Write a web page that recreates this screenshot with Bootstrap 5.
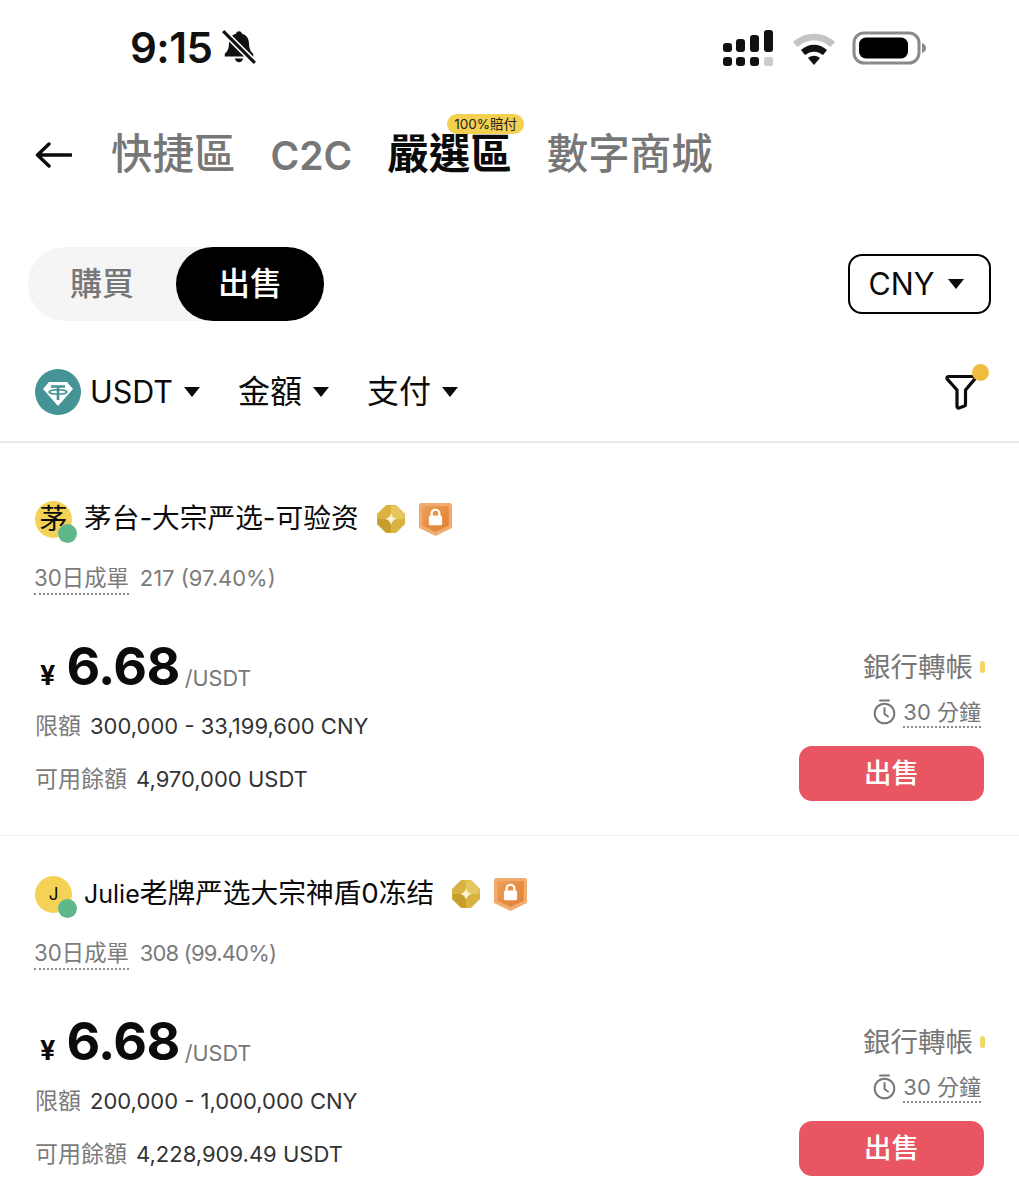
<!DOCTYPE html>
<html lang="zh-Hant">
<head>
<meta charset="utf-8">
<title>嚴選區</title>
<link href="https://cdn.jsdelivr.net/npm/bootstrap@5.3.0/dist/css/bootstrap.min.css" rel="stylesheet">
<style>
html,body{height:1200px;overflow:hidden;background:#fff}
body{font-family:Inter,"Noto Sans CJK TC","Noto Sans CJK SC",sans-serif;color:#0b0b0b;width:1019px}
.status-bar{height:95px;padding:0 93px 0 130px}
.clock{font-size:42px;font-weight:600;letter-spacing:-.5px;line-height:1;color:#111}
.bell{margin-left:-1px;margin-top:-1px}
.wifi-ico{margin-right:-2px}
.tab-row{height:118px;padding-left:35px;padding-top:2px}
.back-arrow{margin-right:39px;margin-top:-1px}
.tab-item{font-size:41.5px;font-weight:500;color:#777;line-height:1;margin-right:35px;white-space:nowrap}
.tab-item.latin{font-weight:600;font-size:39px}
.tab-item.active{color:#0a0a0a;font-weight:700}
.pay-tag{top:-20px;left:60px;background:#f4d050;border-radius:10px;font-size:13.5px;font-weight:400;line-height:20px;padding:0 7px;color:#222;white-space:nowrap}
.side-row{height:74px;margin-top:34px;padding:0 28px 0 28px}
.side-switch{width:296px;height:74px;background:#f5f5f5;border-radius:37px}
.side-opt{width:148px;height:74px;border-radius:37px;font-size:32px;font-weight:500;color:#777}
.side-opt.on{background:#000;color:#fff}
.cny-btn{width:143px;height:60px;border:2px solid #000;border-radius:14px;font-size:30.5px;font-weight:400;gap:14px;padding-right:6px}
.caret{width:0;height:0;border-left:8.5px solid transparent;border-right:8.5px solid transparent;border-top:10px solid #0b0b0b;display:inline-block}
.filter-row{margin-top:35px;padding:0 28px 13px 35px;border-bottom:2px solid #e8e8e8;box-sizing:content-box;height:72px}
.filter-item{font-size:32px;line-height:1;gap:11px;margin-right:38px}
.filter-item .latin-txt{font-size:30.5px}
.coin{width:46px;height:46px;margin-right:-2px}
.filter-wrap{margin-right:14px}
.dot{top:-10px;right:-12px;width:17px;height:17px;background:#eebd3f;border-radius:50%}
.offer{height:375px;border-bottom:1px solid #efefef;padding:0 35px;position:relative}
.offer-first{height:393px;padding-top:56px}
.offer-next{padding-top:38px;border-bottom:0}
.name-line{height:40px;font-size:27.7px;line-height:1;gap:14px;white-space:nowrap}
.avatar{width:37px;height:37px;background:#f4d255;border-radius:50%;font-size:28px;line-height:37px;text-align:center;margin-right:-2px}
.avatar.small-letter{font-size:17px}
.online{right:-5px;bottom:-5px;width:19px;height:19px;background:#5fb88b;border-radius:50%}
.latin-name{font-size:25px}
.medal-gold{width:28px;height:28px;flex:none;margin-left:4px}
.medal-lock{width:33px;height:33px;flex:none}
.stats-line{margin-top:23px;height:36px;font-size:22px;color:#7b7b7b;line-height:32px;gap:11px;white-space:nowrap}
.stat-tight{letter-spacing:-.8px}
.dotted{border-bottom:2px dotted #8b8b8b;display:inline-block;height:33px;font-size:22.3px;margin-left:-1px}
.price-side{margin-top:37px;height:210px}
.price-line{height:64px;gap:0;white-space:nowrap}
.yen{font-size:27px;font-weight:700;margin-right:11px;margin-left:5px;margin-top:17px;line-height:1}
.amount{font-size:52px;font-weight:700;line-height:1;letter-spacing:-.6px;font-family:Inter,sans-serif}
.per{font-size:21.6px;color:#777;margin-left:5px;margin-top:23px;line-height:1}
.info-line{font-size:22px;line-height:30px;gap:9px;color:#333;margin-top:12px;white-space:nowrap}
.info-line + .info-line{margin-top:23px}
.info-line .lbl{color:#7b7b7b;font-size:23px}
.right-side{width:190px;margin-top:14px;padding-right:3px}
.bank{font-size:27.5px;color:#777;line-height:36px;white-space:nowrap;gap:7px}
.bank i{display:block;width:5px;height:12px;border-radius:3px;background:#f1d76a;margin-right:-4px}
.limit{font-size:22px;color:#777;line-height:34px;gap:7px;margin-top:10px;white-space:nowrap}
.limit span{border-bottom:2px dotted #8b8b8b;height:33px}
.sell-btn{width:185px;height:55px;background:#e85563;color:#fff;border-radius:13px;font-size:27.5px;font-weight:500;margin-top:18px;margin-right:-3px}
</style>
</head>
<body>
<div class="status-bar d-flex align-items-center justify-content-between">
  <div class="d-flex align-items-center" style="gap:9px">
    <span class="clock">9:15</span>
    <svg class="bell" width="38" height="38" viewBox="0 0 36 36"><path d="M18 3c-1.600 0-2.600 1-2.800 2.400C10.500 6.600 8.500 10.500 8.500 15c0 4-1 7-4 9.500V27h27v-2.500c-3-2.500-4-5.500-4-9.500 0-4.500-2-8.400-6.700-9.600C20.600 4 19.600 3 18 3z" fill="#111"/><path d="M14 29c.6 2.300 2 3.500 4 3.500s3.400-1.200 4-3.500z" fill="#111"/><path d="M3 3l30 30" stroke="#fff" stroke-width="6"/><path d="M3 3l30 30" stroke="#111" stroke-width="3"/></svg>
  </div>
  <div class="d-flex align-items-center" style="gap:17px">
    <svg width="52" height="36" viewBox="0 0 52 36"><g fill="#111"><rect x="1" y="13" width="9" height="9" rx="3"/><rect x="14" y="9" width="9" height="13" rx="3"/><rect x="28" y="5" width="9" height="17" rx="3"/><rect x="42" y="0" width="9" height="22" rx="3"/><rect x="1" y="27" width="9" height="9" rx="3"/><rect x="14" y="27" width="9" height="9" rx="3"/><rect x="28" y="27" width="9" height="9" rx="3"/></g><rect x="42" y="27" width="9" height="9" rx="2" fill="#ccc"/></svg>
    <svg class="wifi-ico" width="46" height="36" viewBox="0 0 46 36"><path d="M2 12C14 1 32 1 44 12l-4.500 5C29 8 17 8 6.500 17z" fill="#c4c4c4"/><path d="M10 20c8-7 18-7 26 0l-4 5c-6-4.500-12-4.500-18 0z" fill="#111"/><path d="M17 28c4-3 8-3 12 0l-6 7z" fill="#111"/></svg>
    <svg width="74" height="34" viewBox="0 0 74 34"><rect x="2" y="2" width="65" height="30" rx="10" fill="none" stroke="#8a8a8a" stroke-width="3"/><rect x="7" y="6.500" width="49" height="21" rx="7" fill="#000"/><path d="M70 12c3 1 4 3 4 5s-1 4-4 5z" fill="#8a8a8a"/></svg>
  </div>
</div>

<div class="tab-row d-flex align-items-center">
  <svg class="back-arrow" width="37" height="28" viewBox="0 0 37 28"><path d="M36 14H3M14 3 2.500 14 14 25" fill="none" stroke="#0b0b0b" stroke-width="3.400" stroke-linecap="round" stroke-linejoin="round"/></svg>
  <span class="tab-item">快捷區</span>
  <span class="tab-item latin">C2C</span>
  <span class="tab-item active position-relative">嚴選區<span class="pay-tag position-absolute">100%賠付</span></span>
  <span class="tab-item">數字商城</span>
</div>

<div class="side-row d-flex align-items-center justify-content-between">
  <div class="side-switch d-flex">
    <div class="side-opt d-flex align-items-center justify-content-center">購買</div>
    <div class="side-opt on d-flex align-items-center justify-content-center">出售</div>
  </div>
  <div class="cny-btn d-flex align-items-center justify-content-center">CNY <span class="caret"></span></div>
</div>

<div class="filter-row d-flex align-items-center">
  <div class="filter-item d-flex align-items-center">
    <svg class="coin" viewBox="0 0 46 46"><circle cx="23" cy="23" r="23" fill="#459394"/><path d="M14 13h18l6 7-15 17L8 20z" fill="#fff"/><path d="M16 17.500h14M23 17.500V31" stroke="#459394" stroke-width="2.600" fill="none"/><ellipse cx="23" cy="23" rx="9" ry="2.200" fill="none" stroke="#459394" stroke-width="1.600"/></svg>
    <span class="latin-txt">USDT</span><span class="caret"></span>
  </div>
  <div class="filter-item d-flex align-items-center"><span>金額</span><span class="caret"></span></div>
  <div class="filter-item d-flex align-items-center"><span>支付</span><span class="caret"></span></div>
  <div class="ms-auto position-relative filter-wrap">
    <svg class="d-block" width="32" height="36" viewBox="0 0 32 36"><path d="M3.500 2.500h25c1.500 0 2 1.500 1.200 2.600L20.500 16v14.500c0 .8-.3 1.300-1 1.500l-5.500 2c-1 .3-2-.3-2-1.500V16L2.300 5.100C1.500 4 2 2.500 3.500 2.500z" fill="none" stroke="#0b0b0b" stroke-width="3.200" stroke-linejoin="round"/></svg>
    <span class="dot position-absolute"></span>
  </div>
</div>

<div class="offer offer-first">
  <div class="name-line d-flex align-items-center">
    <div class="avatar position-relative">茅<span class="online position-absolute"></span></div>
    <span>茅台-大宗严选-可验资</span>
    <svg class="medal-gold" viewBox="2 2 28 28"><path d="M11 2.500h10l8.500 8.500v10L21 29.500H11L2.500 21V11z" fill="#d9b23f" stroke="#d9b23f" stroke-linejoin="round"/><path d="M16 2.500h5l8.500 8.500v5H16z" fill="#e6c65e"/><path d="M16 29.500h-5L2.500 21v-5H16z" fill="#c79d2e"/><path d="M16 10c.7 3.600 2.400 5.300 6 6-3.600.7-5.300 2.400-6 6-.7-3.600-2.400-5.300-6-6 3.600-.7 5.300-2.400 6-6z" fill="#fbf3d2"/></svg>
    <svg class="medal-lock" viewBox="1 1 30 32" preserveAspectRatio="none"><defs><linearGradient id="lk1" x1="0" y1="0" x2="1" y2="1"><stop offset="0" stop-color="#ee9f58"/><stop offset="1" stop-color="#e07f2f"/></linearGradient></defs><path d="M3 1h26c1 0 2 1 2 2v21c0 1-.5 1.500-1.500 2L16 33 2.500 26c-1-.5-1.500-1-1.500-2V3c0-1 1-2 2-2z" fill="#f0ab70"/><path d="M5 4h22c.6 0 1 .4 1 1v17c0 .8-.3 1.200-1 1.500L16 29 5 23.500c-.7-.3-1-.7-1-1.500V5c0-.6.4-1 1-1z" fill="url(#lk1)"/><path d="M12.500 14v-3a3.500 3.500 0 0 1 7 0v3" fill="none" stroke="#fff" stroke-width="2"/><rect x="10" y="13" width="12" height="9.500" rx="1.500" fill="#fff"/></svg>
  </div>
  <div class="stats-line d-flex"><span class="dotted">30日成單</span><span>217 (97.40%)</span></div>
  <div class="price-side d-flex justify-content-between">
    <div>
      <div class="price-line d-flex align-items-center"><span class="yen">¥</span><span class="amount">6.68</span><span class="per">/USDT</span></div>
      <div class="info-line d-flex"><span class="lbl">限額</span><span>300,000 - 33,199,600 CNY</span></div>
      <div class="info-line d-flex"><span class="lbl">可用餘額</span><span>4,970,000 USDT</span></div>
    </div>
    <div class="right-side d-flex flex-column align-items-end">
      <div class="bank d-flex align-items-center">銀行轉帳<i></i></div>
      <div class="limit d-flex align-items-start">
        <svg class="mt-1" width="23" height="26" viewBox="0 0 23 26"><circle cx="11.500" cy="14.500" r="9.800" fill="none" stroke="#777" stroke-width="2"/><path d="M7 1.500h9M11.500 9v6l3.500 2.500" fill="none" stroke="#777" stroke-width="2" stroke-linecap="round"/></svg>
        <span>30 分鐘</span>
      </div>
      <div class="sell-btn d-flex align-items-center justify-content-center">出售</div>
    </div>
  </div>
</div>

<div class="offer offer-next">
  <div class="name-line d-flex align-items-center">
    <div class="avatar small-letter position-relative">J<span class="online position-absolute"></span></div>
    <span><span class="latin-name">Julie</span>老牌严选大宗神盾0冻结</span>
    <svg class="medal-gold" viewBox="2 2 28 28"><path d="M11 2.500h10l8.500 8.500v10L21 29.500H11L2.500 21V11z" fill="#d9b23f" stroke="#d9b23f" stroke-linejoin="round"/><path d="M16 2.500h5l8.500 8.500v5H16z" fill="#e6c65e"/><path d="M16 29.500h-5L2.500 21v-5H16z" fill="#c79d2e"/><path d="M16 10c.7 3.600 2.400 5.300 6 6-3.600.7-5.300 2.400-6 6-.7-3.600-2.400-5.300-6-6 3.600-.7 5.300-2.400 6-6z" fill="#fbf3d2"/></svg>
    <svg class="medal-lock" viewBox="1 1 30 32" preserveAspectRatio="none"><defs><linearGradient id="lk2" x1="0" y1="0" x2="1" y2="1"><stop offset="0" stop-color="#ee9f58"/><stop offset="1" stop-color="#e07f2f"/></linearGradient></defs><path d="M3 1h26c1 0 2 1 2 2v21c0 1-.5 1.500-1.500 2L16 33 2.500 26c-1-.5-1.500-1-1.500-2V3c0-1 1-2 2-2z" fill="#f0ab70"/><path d="M5 4h22c.6 0 1 .4 1 1v17c0 .8-.3 1.200-1 1.500L16 29 5 23.500c-.7-.3-1-.7-1-1.500V5c0-.6.4-1 1-1z" fill="url(#lk2)"/><path d="M12.500 14v-3a3.500 3.500 0 0 1 7 0v3" fill="none" stroke="#fff" stroke-width="2"/><rect x="10" y="13" width="12" height="9.500" rx="1.500" fill="#fff"/></svg>
  </div>
  <div class="stats-line d-flex"><span class="dotted">30日成單</span><span class="stat-tight">308 (99.40%)</span></div>
  <div class="price-side d-flex justify-content-between">
    <div>
      <div class="price-line d-flex align-items-center"><span class="yen">¥</span><span class="amount">6.68</span><span class="per">/USDT</span></div>
      <div class="info-line d-flex"><span class="lbl">限額</span><span>200,000 - 1,000,000 CNY</span></div>
      <div class="info-line d-flex"><span class="lbl">可用餘額</span><span>4,228,909.49 USDT</span></div>
    </div>
    <div class="right-side d-flex flex-column align-items-end">
      <div class="bank d-flex align-items-center">銀行轉帳<i></i></div>
      <div class="limit d-flex align-items-start">
        <svg class="mt-1" width="23" height="26" viewBox="0 0 23 26"><circle cx="11.500" cy="14.500" r="9.800" fill="none" stroke="#777" stroke-width="2"/><path d="M7 1.500h9M11.500 9v6l3.500 2.500" fill="none" stroke="#777" stroke-width="2" stroke-linecap="round"/></svg>
        <span>30 分鐘</span>
      </div>
      <div class="sell-btn d-flex align-items-center justify-content-center">出售</div>
    </div>
  </div>
</div>
</body>
</html>
